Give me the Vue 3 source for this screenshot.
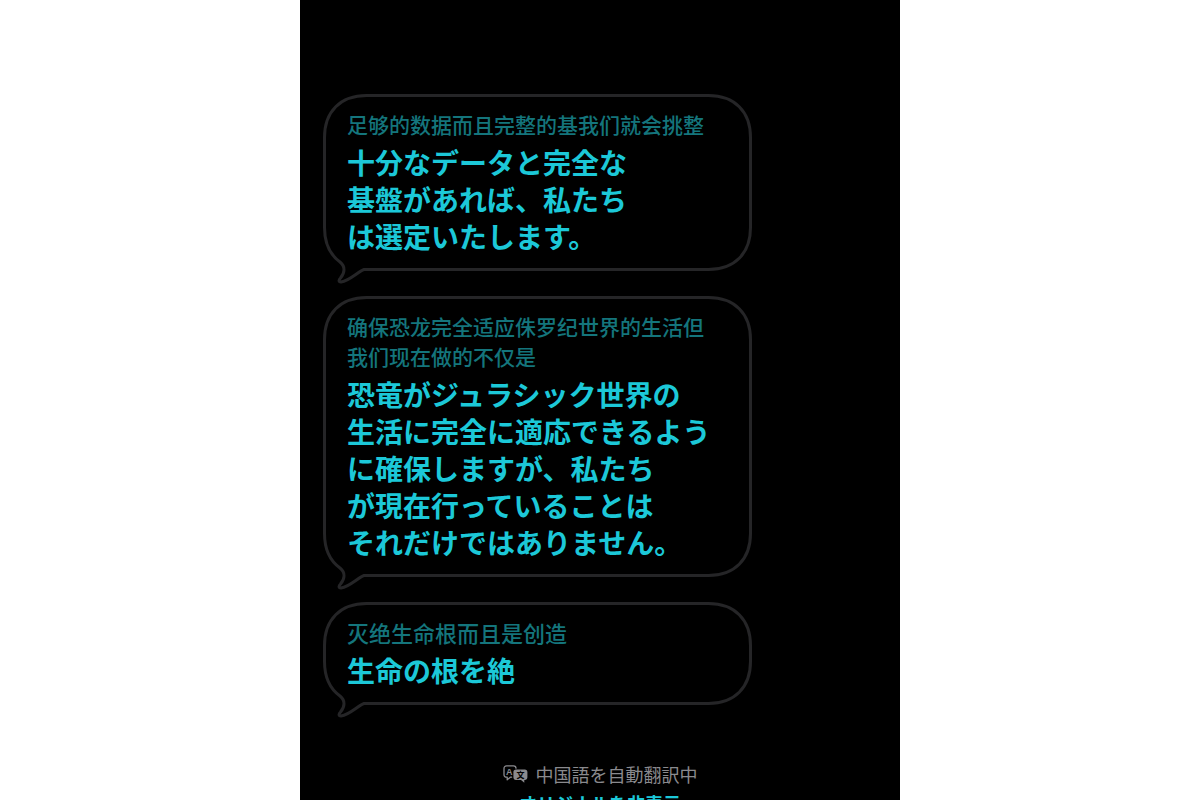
<script setup>
import { ref, onMounted, onBeforeUnmount } from 'vue'

const messages = [
  {
    id: 1,
    source: ['足够的数据而且完整的基我们就会挑整'],
    translation: ['十分なデータと完全な', '基盤があれば、私たち', 'は選定いたします。'],
  },
  {
    id: 2,
    source: ['确保恐龙完全适应侏罗纪世界的生活但', '我们现在做的不仅是'],
    translation: [
      '恐竜がジュラシック世界の',
      '生活に完全に適応できるよう',
      'に確保しますが、私たち',
      'が現在行っていることは',
      'それだけではありません。',
    ],
  },
  {
    id: 3,
    roomy: true,
    source: ['灭绝生命根而且是创造'],
    translation: ['生命の根を絶'],
  },
]

const bubbles = ref([])
const outlines = ref([])

// Bubble outline with smooth corners and a tail at the bottom left.
function outline(w, h) {
  const l = 1.5
  const t = 1.5
  const r = w - 1.5
  const b = h - 1.5
  const c = 42
  const k = 16
  return [
    `M${l + c} ${t}`,
    `H${r - c}`,
    `C${r - k} ${t} ${r} ${t + k} ${r} ${t + c}`,
    `V${b - c}`,
    `C${r} ${b - k} ${r - k} ${b} ${r - c} ${b}`,
    `H41`,
    `C35 ${b + 2} 27 ${b + 11} 18 ${b + 12.5}`,
    `C15 ${b + 12.5} 16 ${b + 10} 17.5 ${b + 8.5}`,
    `C22 ${b + 3} 22.5 ${b - 3} 17 ${b - 7.5}`,
    `C8 ${b - 14} ${l} ${b - 24} ${l} ${b - 42}`,
    `V${t + c}`,
    `C${l} ${t + k} ${l + k} ${t} ${l + c} ${t}`,
    'Z',
  ].join(' ')
}

function measure() {
  outlines.value = bubbles.value.map((el) => outline(el.offsetWidth, el.offsetHeight))
}

let observer
onMounted(() => {
  measure()
  observer = new ResizeObserver(measure)
  bubbles.value.forEach((el) => observer.observe(el))
})
onBeforeUnmount(() => observer.disconnect())
</script>

<template>
  <main class="screen" lang="ja">
    <section class="messages">
      <article v-for="(m, i) in messages" :key="m.id" ref="bubbles" class="bubble">
        <svg class="outline" aria-hidden="true">
          <path :d="outlines[i]" />
        </svg>
        <p class="source" :class="{ roomy: m.roomy }" lang="zh-Hans">
          <span v-for="line in m.source" :key="line" class="line">{{ line }}</span>
        </p>
        <p class="translation">
          <span v-for="line in m.translation" :key="line" class="line">{{ line }}</span>
        </p>
      </article>
    </section>

    <footer class="status">
      <p class="translating">
        <svg class="icon" width="25" height="18" viewBox="0 0 25 18" aria-hidden="true">
          <path
            d="M8.6 12.2H7.4L4.2 14.8V12.2H3.6C2 12.2 1 11.2 1 9.7V3.4C1 1.9 2 .9 3.5 .9H10.5C12 .9 13 1.9 13 3.2"
            fill="none"
            stroke="#8a8a8e"
            stroke-width="1.3"
            stroke-linecap="round"
            stroke-linejoin="round"
          />
          <path
            d="M13 4.4H21.8C23.4 4.4 24.4 5.4 24.4 7V12.3C24.4 13.9 23.4 14.9 21.8 14.9H21.3V17.7L18 14.9H13C11.4 14.9 10.4 13.9 10.4 12.3V7C10.4 5.4 11.4 4.4 13 4.4Z"
            fill="#8a8a8e"
          />
          <text x="6.2" y="9.6" class="latin">A</text>
          <text x="17.4" y="12.7" class="han">文</text>
        </svg>
        <span>中国語を自動翻訳中</span>
      </p>
      <button type="button" class="toggle">オリジナルを非表示</button>
    </footer>
  </main>
</template>

<style>
body {
  margin: 0;
  background: #fff;
}
</style>

<style scoped>
.screen {
  box-sizing: border-box;
  width: 100%;
  max-width: 600px;
  height: 100vh;
  margin: 0 auto;
  padding-top: 94px;
  overflow: hidden;
  background: #000;
  font-family: "Noto Sans CJK JP", sans-serif;
}

.messages {
  display: flex;
  flex-direction: column;
  gap: 25px;
  padding-left: 23px;
}

.bubble {
  position: relative;
  box-sizing: border-box;
  width: 100%;
  max-width: 429px;
  padding: 15px 24px 16px;
}

.outline {
  position: absolute;
  inset: 0;
  width: 100%;
  height: 100%;
  overflow: visible;
}

.outline path {
  fill: none;
  stroke: #252527;
  stroke-width: 3px;
  stroke-linejoin: round;
}

.source,
.translation {
  margin: 0;
  position: relative;
}

.line {
  display: block;
  white-space: nowrap;
}

.source {
  margin-bottom: 5px;
  color: #14757c;
  font-family: "Noto Sans CJK SC", sans-serif;
  font-size: 21px;
  font-weight: 500;
  line-height: 30px;
}

.source.roomy {
  font-size: 22px;
}

.translation {
  color: #1cc8d8;
  font-size: 28px;
  font-weight: 700;
  line-height: 37px;
}

.status {
  display: flex;
  flex-direction: column;
  align-items: center;
  margin-top: 54px;
}

.translating {
  display: flex;
  align-items: center;
  gap: 8px;
  margin: 0;
  color: #8a8a8e;
  font-size: 18px;
  line-height: 30px;
}

.icon text {
  text-anchor: middle;
  font-weight: 700;
}

.latin {
  fill: #8a8a8e;
  font-family: "Liberation Sans", sans-serif;
  font-size: 9px;
}

.han {
  fill: #000;
  font-size: 8px;
}

.toggle {
  padding: 0;
  border: 0;
  background: none;
  color: #1cc8d8;
  font-family: inherit;
  font-size: 18px;
  font-weight: 700;
  line-height: 28px;
}
</style>
